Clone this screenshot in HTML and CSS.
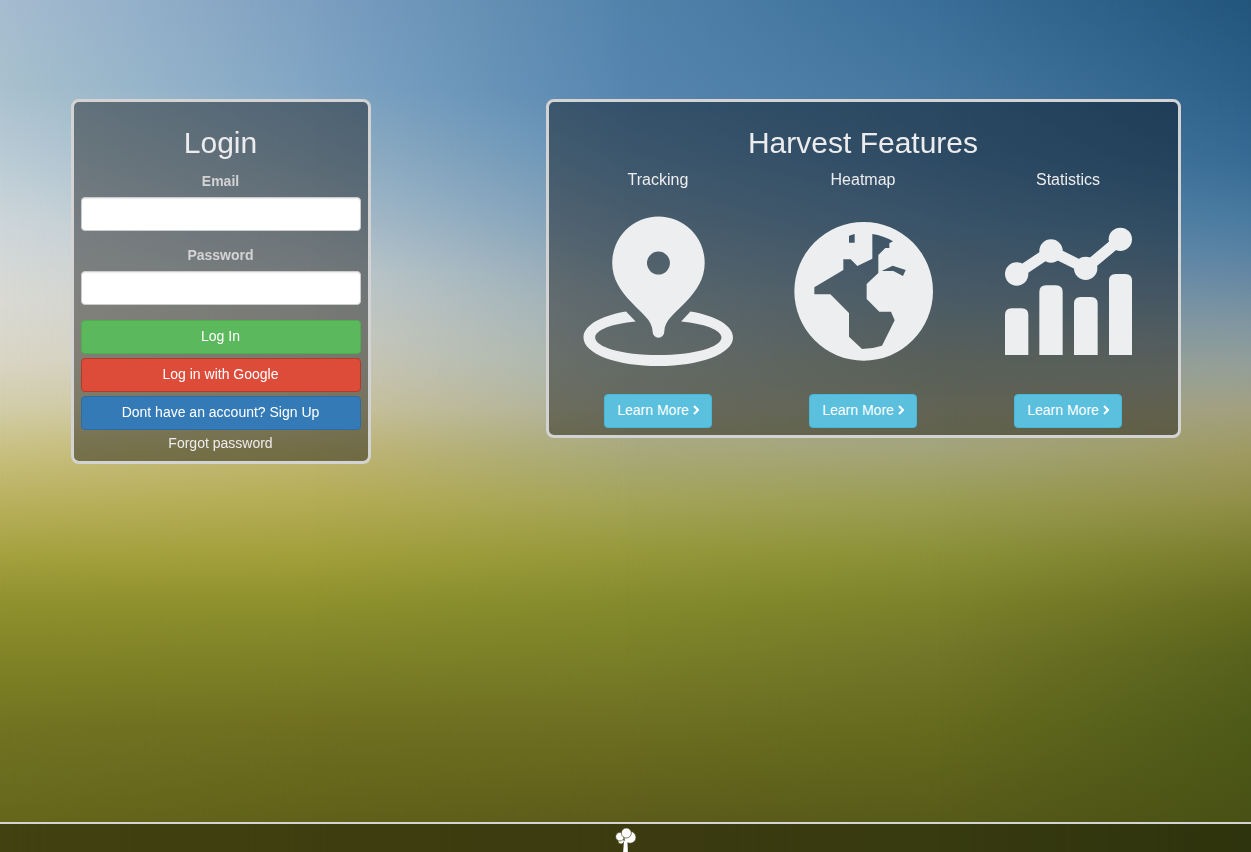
FILE: index.html
```html
<!DOCTYPE html>
<html lang="en">
<head>
<meta charset="utf-8">
<meta name="viewport" content="width=device-width, initial-scale=1">
<title>Harvest</title>
<link rel="stylesheet" href="styles.css">
</head>
<body>
<div class="backdrop" aria-hidden="true">
  <div class="sky sky-1"></div>
  <div class="sky sky-2"></div>
  <div class="sky sky-3"></div>
  <div class="sky sky-4"></div>
  <div class="sky sky-5"></div>
</div>

<main class="container">
  <section class="card login">
    <h2 class="title">Login</h2>
    <form class="form">
      <div class="field">
        <label class="label" for="email">Email</label>
        <input class="input" id="email" type="email">
      </div>
      <div class="field">
        <label class="label" for="password">Password</label>
        <input class="input" id="password" type="password">
      </div>
      <div class="actions">
        <button class="btn btn-success" type="submit">Log In</button>
        <button class="btn btn-google" type="button">Log in with Google</button>
        <button class="btn btn-primary" type="button">Dont have an account? Sign Up</button>
      </div>
    </form>
    <a class="forgot" href="#">Forgot password</a>
  </section>

  <section class="card features">
    <h2 class="title">Harvest Features</h2>
    <div class="feature-grid">
      <article class="feature">
        <h3 class="feature-name">Tracking</h3>
        <svg class="feature-icon" viewBox="-0.5 -0.5 150.5 150.5" aria-hidden="true">
          <path fill-rule="evenodd" d="M28.8 46.4a46.4 46.4 0 0 1 92.8 0c0 16-8 28-19 39.5C92 97 81.2 104 81 115.800a5.800 5.800 0 0 1-11.600 0C69.200 104 58 97 47.800 85.900 36.800 74.400 28.800 62.400 28.800 46.400zM63.700 46.700a11.500 11.500 0 1 0 23 0 11.500 11.500 0 1 0-23 0z"/>
          <path d="M42.700 95.300C17 99.500 0 109.500 0 121.300 0 137.600 33 150 75 150s75-12.400 75-28.700c0-11.800-17-21.800-42.700-26L97.900 105.300c24.100 2.200 40.500 8.700 40.500 16 0 9.700-27.400 17.700-63.400 17.700S11.700 131 11.700 121.300c0-7.300 16.300-13.800 40.600-16z"/>
        </svg>
        <button class="btn btn-info" type="button">Learn More <svg class="chevron" viewBox="0 0 6 10" aria-hidden="true"><path d="M1 1l4 4-4 4"/></svg></button>
      </article>
      <article class="feature">
        <h3 class="feature-name">Heatmap</h3>
        <svg class="feature-icon" viewBox="24 48 450 450" aria-hidden="true">
          <path fill-rule="evenodd" d="M43 274a208 208 0 1 0 416 0 208 208 0 1 0-416 0zM277 102q34 5 62 22l-11 6v14h-12l-21 21v54l-35 33v45l38 38h35l11 26-38 76q-27 9-60 10l-39-37v-71l-56-56h-48v-21l87-52v-32h22l20 20 45-22zM207 107l17-5v26h-17zM305 213l33-16 39 13-8 18-29-15z"/>
        </svg>
        <button class="btn btn-info" type="button">Learn More <svg class="chevron" viewBox="0 0 6 10" aria-hidden="true"><path d="M1 1l4 4-4 4"/></svg></button>
      </article>
      <article class="feature">
        <h3 class="feature-name">Statistics</h3>
        <svg class="feature-icon" viewBox="9 48 450 450" aria-hidden="true">
          <path d="M45 465V345q0-20 20-20h30q20 0 20 20v120zM148 465V276q0-20 20-20h30q20 0 20 20v189zM252 465V311q0-20 20-20h31q20 0 20 20v154zM357 465V242q0-20 20-20h29q20 0 20 20v223z"/>
          <path class="trend" d="M80 222l103-69 104 52 104-87"/>
          <circle cx="80" cy="222" r="35"/><circle cx="183" cy="153" r="35"/><circle cx="287" cy="205" r="35"/><circle cx="391" cy="118" r="35"/>
        </svg>
        <button class="btn btn-info" type="button">Learn More <svg class="chevron" viewBox="0 0 6 10" aria-hidden="true"><path d="M1 1l4 4-4 4"/></svg></button>
      </article>
    </div>
  </section>
</main>

<footer class="footer">
  <svg class="tree" viewBox="90 54 66 72" role="img" aria-label="Harvest">
    <path d="M114 128l3-40h10l2 40z"/>
    <circle cx="108" cy="93" r="9"/>
    <circle cx="105" cy="80" r="13"/>
    <circle cx="135" cy="82" r="18"/>
    <circle cx="124" cy="69" r="15"/>
    <path class="trunk" d="M115 128l2-32-6-5 8 3 3-6 5 6 1 34z"/>
  </svg>
</footer>
</body>
</html>
```

FILE: styles.css
```css
*, *::before, *::after {
  box-sizing: border-box;
}

body {
  display: flex;
  flex-direction: column;
  min-height: 100vh;
  margin: 0;
  background: #6b6c22;
  color: #d3d3d3;
  font-family: "Liberation Sans", Arial, sans-serif;
  font-size: 14px;
  line-height: 20px;
}

/* Blurred field: vertical gradients cross-faded from left to right */
.backdrop,
.sky {
  position: absolute;
  inset: 0;
}

.backdrop {
  position: fixed;
  z-index: -1;
}

.sky-1 {
  background: linear-gradient(#a6bcd0 0%, #a9c1ce 10%, #b9cbd5 18%, #cdd6da 26%, #dadad4 35%, #d9d6c6 42%, #d2cda8 48%, #c8c080 53%, #b9b15e 59%, #a5a240 65%, #8f902e 71%, #828426 77%, #727422 85%, #65661b 97%);
}

.sky-2 {
  background: linear-gradient(#7c9fc0 0%, #80a5c4 10%, #93b0c4 18%, #a8bcca 25%, #c0cacc 32%, #cacbc0 39%, #ccc7b0 44%, #cac29a 48%, #c0b674 53%, #b6ae58 58%, #a2a03c 65%, #8d902c 71%, #7f8228 77%, #707020 85%, #60601a 97%);
  mask-image: linear-gradient(90deg, transparent 0%, #000 25%);
}

.sky-3 {
  background: linear-gradient(#5283ab 0%, #5686b0 11%, #6490b5 18%, #7a9cb6 26%, #98acb5 35%, #a5b3ae 42%, #acb09a 48%, #a9aa80 52%, #a4a458 59%, #96983a 65%, #848a2c 71%, #7a7f28 77%, #6e6f22 85%, #5c5b1a 97%);
  mask-image: linear-gradient(90deg, transparent 25%, #000 50%);
}

.sky-4 {
  background: linear-gradient(#3a6e98 0%, #44769e 10%, #4c7ca6 18%, #5f8aae 26%, #7c98aa 35%, #929f96 42%, #a2a58c 48%, #a2a478 53%, #9a9c52 59%, #8b9038 65%, #7b822a 71%, #717628 77%, #656b1e 85%, #565a18 97%);
  mask-image: linear-gradient(90deg, transparent 50%, #000 75%);
}

.sky-5 {
  background: linear-gradient(#23557b 0%, #2c5f88 10%, #386b94 19%, #4a7ba0 26%, #6487a4 32%, #8096a0 38%, #949f98 43%, #a2a080 48%, #9f9a62 53%, #918f48 59%, #7b7e2e 65%, #666d20 71%, #58621c 77%, #4e5a18 85%, #485015 97%);
  mask-image: linear-gradient(90deg, transparent 75%, #000 100%);
}

.container {
  display: flex;
  flex-wrap: wrap;
  flex: 1;
  align-items: flex-start;
  justify-content: space-between;
  gap: 24px;
  width: 100%;
  max-width: 1110px;
  margin: 0 auto;
  padding: 99px 0 24px;
}

.card {
  padding: 7px;
  border: 3px solid #d3d3d3;
  border-radius: 8px;
  background: rgba(0, 0, 0, 0.4);
  text-align: center;
}

.login {
  flex: 0 1 300px;
}

.features {
  flex: 0 1 635px;
}

.title {
  margin: 17px 0 11px;
  color: #ececee;
  font-size: 30px;
  font-weight: 500;
  line-height: 33px;
}

.form,
.field,
.actions,
.feature {
  display: flex;
  flex-direction: column;
}

.form {
  gap: 15px;
  padding-top: 2px;
}

.field {
  gap: 7px;
}

.label {
  font-weight: 700;
  line-height: 18px;
}

.input {
  width: 100%;
  height: 34px;
  padding: 6px 12px;
  border: 1px solid #ccc;
  border-radius: 4px;
  background: #fff;
  box-shadow: inset 0 1px 1px rgba(0, 0, 0, 0.08);
  font: inherit;
}

.actions {
  gap: 4px;
}

.btn {
  padding: 5px 12px 7px;
  border: 1px solid transparent;
  border-radius: 4px;
  color: #fff;
  font: inherit;
  cursor: pointer;
}

.btn-success {
  border-color: #4cae4c;
  background: #5cb85c;
}

.btn-google {
  border-color: #b23a2b;
  background: #dd4b39;
}

.btn-primary {
  border-color: #2e6da4;
  background: #337ab7;
}

.btn-info {
  border-color: #46b8da;
  background: #5bc0de;
}

.forgot {
  display: block;
  margin: 3px 0 1px;
  color: #ececec;
  text-decoration: none;
}

.feature-grid {
  display: grid;
  grid-template-columns: repeat(3, 1fr);
}

.feature {
  align-items: center;
}

.feature-name {
  margin: 0 0 27px;
  color: #ececee;
  font-size: 16px;
  font-weight: 500;
  line-height: 19px;
}

.feature-icon {
  width: 150px;
  height: 150px;
  margin-bottom: 28px;
  fill: #eceeef;
}

.trend {
  fill: none;
  stroke: #eceeef;
  stroke-width: 33;
}

.chevron {
  width: 6px;
  height: 10px;
  fill: none;
  stroke: #fff;
  stroke-width: 2;
}

.footer {
  display: flex;
  justify-content: center;
  padding-top: 4px;
  border-top: 2px solid #d3d3d3;
  background: rgba(0, 0, 0, 0.35);
}

.tree {
  width: 22px;
  height: 24px;
  fill: #fff;
  stroke: #3f3d14;
  stroke-width: 2;
}

.trunk {
  stroke: none;
}
```
